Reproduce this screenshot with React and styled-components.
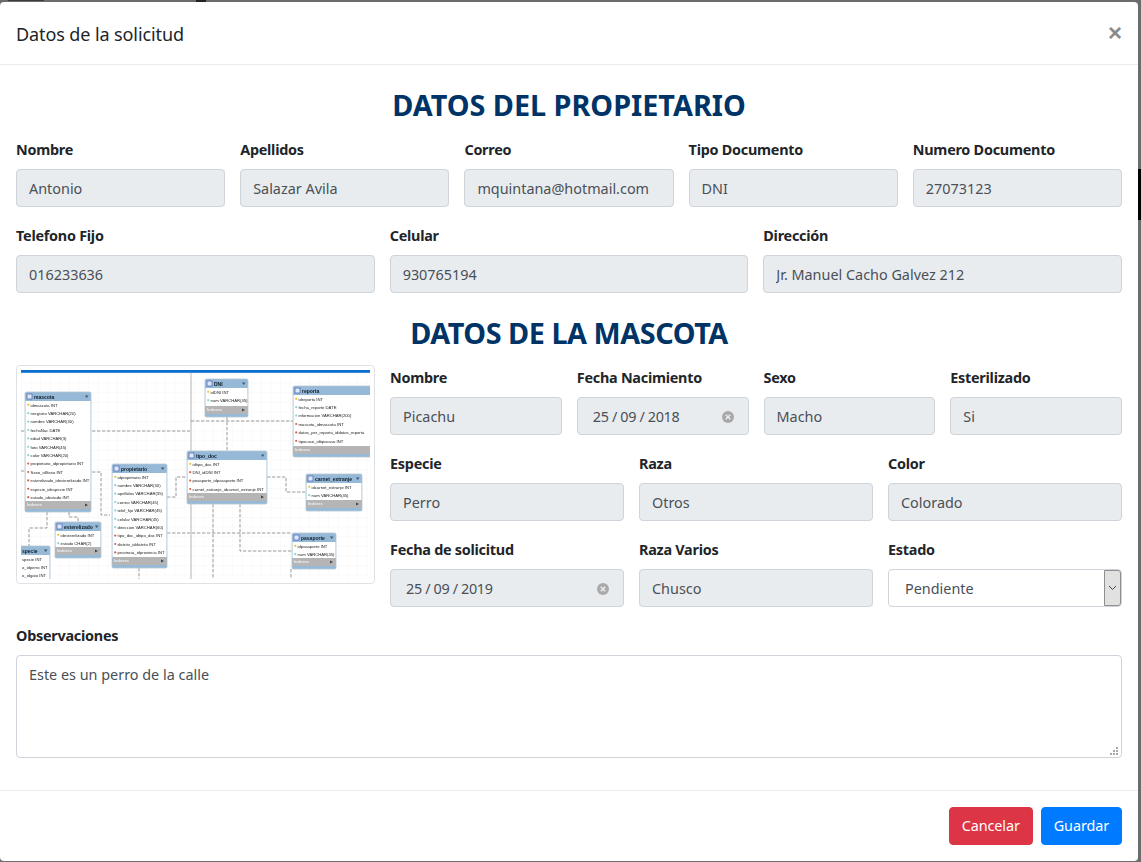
import React from "react";
import styled, { createGlobalStyle } from "styled-components";

const GlobalStyle = createGlobalStyle`
  html, body {
    margin: 0;
    padding: 0;
    height: 862px;
    overflow: hidden;
    font-family: "Noto Sans", "Liberation Sans", sans-serif;
  }
  * {
    box-sizing: border-box;
  }
`;

const Backdrop = styled.div`
  height: 862px;
  padding-top: 2px;
  background:
    linear-gradient(#000, #000) right 169px / 3px 51px no-repeat,
    linear-gradient(#222, #222) 196px 0 / 10px 2px no-repeat,
    linear-gradient(#3c3c3c, #3c3c3c) 8px 0 / 36px 1px no-repeat,
    #6c6c6c;
`;

const Modal = styled.div`
  width: 1138px;
  height: 859px;
  background: #fff;
  border-radius: 4px;
  color: #212529;
`;

const Header = styled.header`
  display: flex;
  align-items: flex-start;
  justify-content: space-between;
  height: 63px;
  padding: 16px;
  border-bottom: 1px solid #e9ecef;
`;

const ModalTitle = styled.h5`
  margin: 0;
  padding-top: 1px;
  font-size: 18px;
  font-weight: 400;
  line-height: 30px;
  letter-spacing: -0.1px;
`;

const Close = styled.button`
  border: 0;
  padding: 0;
  background: none;
  color: #8a8a8a;
  font: 700 24px/30px "Liberation Sans", sans-serif;
  cursor: pointer;
`;

const Body = styled.div`
  padding: 16px;
`;

const SectionTitle = styled.h2`
  margin: 5px 0 13px;
  color: #003366;
  font-size: 28.8px;
  font-weight: 700;
  line-height: 38px;
  letter-spacing: ${(p) => p.$spacing || "0"};
  text-align: center;
`;

const Row = styled.div`
  display: grid;
  grid-template-columns: repeat(${(p) => p.$cols}, minmax(0, 1fr));
  column-gap: 15px;
`;

const PetGrid = styled.div`
  display: grid;
  grid-template-columns: 359px minmax(0, 1fr);
  column-gap: 15px;
`;

const Thumbnail = styled.div`
  height: 219px;
  padding: 4px;
  background: #fff;
  border: 1px solid #dee2e6;
  border-radius: 4px;

  & > svg {
    display: block;
    width: 349px;
    height: 209px;
  }
`;

const Group = styled.div`
  margin-bottom: 16px;
`;

const Label = styled.label`
  display: block;
  margin-bottom: 7px;
  padding-top: 1px;
  font-size: 14.4px;
  font-weight: 700;
  line-height: 24px;
  letter-spacing: -0.25px;
`;

const fieldBase = `
  display: block;
  width: 100%;
  height: 38px;
  padding: 6px 12px;
  border: 1px solid #ced4da;
  border-radius: 4px;
  color: #495057;
  font-family: inherit;
  font-size: 14.4px;
  line-height: 24px;
`;

const Input = styled.input`
  ${fieldBase}
  background: #e9ecef;
  outline: none;
`;

const DateBox = styled.div`
  ${fieldBase}
  display: flex;
  align-items: center;
  justify-content: space-between;
  padding: 7px 14px 5px 15px;
  background: #e9ecef;
  letter-spacing: -0.35px;
`;

const SelectBox = styled.div`
  ${fieldBase}
  display: flex;
  align-items: center;
  justify-content: space-between;
  padding: 0 0 0 16px;
  background: #fff;

  & > span:first-child {
    padding-top: 1px;
  }
`;

const SelectArrow = styled.span`
  display: flex;
  align-items: center;
  justify-content: center;
  width: 17px;
  height: 36px;
  background: #e1e1e1;
  border: 1px solid #8f8f8f;
  border-radius: 0 3px 3px 0;
`;

const NotesWrap = styled.div`
  position: relative;
  height: 103px;
`;

const Notes = styled.textarea`
  ${fieldBase}
  height: 103px;
  padding-top: 7px;
  background: #fff;
  resize: none;
  outline: none;
`;

const Grip = styled.svg`
  position: absolute;
  right: 4px;
  bottom: 3px;
  width: 8px;
  height: 8px;
`;

const Footer = styled.footer`
  display: flex;
  justify-content: flex-end;
  gap: 8px;
  padding: 16px;
  border-top: 1px solid #e9ecef;
`;

const Button = styled.button`
  height: 38px;
  padding: 6px 12px;
  border: 1px solid ${(p) => p.$bg};
  border-radius: 4px;
  background: ${(p) => p.$bg};
  color: #fff;
  font-family: inherit;
  font-size: 14.4px;
  line-height: 24px;
  letter-spacing: -0.1px;
  cursor: pointer;
`;

const ClearIcon = () => (
  <svg width="12" height="12" viewBox="0 0 12 12">
    <circle cx="6" cy="6" r="6" fill="#a9a9a9" />
    <path d="M3.8 3.8l4.4 4.4M8.2 3.8l-4.4 4.4" stroke="#e9ecef" strokeWidth="1.6" />
  </svg>
);

const ChevronDown = () => (
  <svg width="9" height="6" viewBox="0 0 9 6">
    <path d="M1 1l3.5 3.5L8 1" fill="none" stroke="#444" strokeWidth="1" />
  </svg>
);

const erTables = [
  {
    name: "mascota", x: 25, y: 392, w: 66, h: 120,
    rows: [
      ["idmascota INT", "k"], ["nregistro VARCHAR(20)", "c"], ["nombre VARCHAR(30)", "c"],
      ["fechaNac DATE", "c"], ["edad VARCHAR(3)", "c"], ["foto VARCHAR(45)", "c"],
      ["color VARCHAR(20)", "c"], ["propietario_idpropietario INT", "f"], ["Sexo_idSexo INT", "f"],
      ["esterelizado_idesterelizado INT", "f"], ["especie_idespecie INT", "f"], ["estado_idestado INT", "f"],
    ],
  },
  {
    name: "esterelizado", x: 55, y: 522, w: 46, h: 36,
    rows: [["idesterelizado INT", "k"], ["estado CHAR(2)", "c"]],
  },
  {
    name: "propietario", x: 112, y: 464, w: 55, h: 104,
    rows: [
      ["idpropietario INT", "k"], ["nombre VARCHAR(30)", "c"], ["apellidos VARCHAR(35)", "c"],
      ["correo VARCHAR(45)", "c"], ["telef_fijo VARCHAR(45)", "c"], ["celular VARCHAR(45)", "c"],
      ["direccion VARCHAR(60)", "c"], ["tipo_doc_idtipo_doc INT", "f"], ["distrito_iddistrito INT", "f"],
      ["provincia_idprovincia INT", "f"],
    ],
  },
  {
    name: "specie", x: 2, y: 546, w: 48, h: 44, nameX: 22, textX: 22, cut: true,
    rows: [["specie INT", "n"], ["o_idperro INT", "n"], ["o_idgato INT", "n"]],
  },
  {
    name: "tipo_doc", x: 187, y: 451, w: 80, h: 53,
    rows: [
      ["idtipo_doc INT", "k"], ["DNI_idDNI INT", "f"], ["pasaporte_idpasaporte INT", "f"],
      ["carnet_extranje_idcarnet_extranje INT", "f"],
    ],
  },
  {
    name: "DNI", x: 205, y: 379, w: 43, h: 38,
    rows: [["idDNI INT", "k"], ["num VARCHAR(45)", "c"]],
  },
  {
    name: "reporta", x: 293, y: 386, w: 90, h: 71,
    rows: [
      ["idreporta INT", "k"], ["fecha_reporte DATE", "c"], ["informacion VARCHAR(200)", "c"],
      ["mascota_idmascota INT", "f"], ["datos_per_reporta_iddatos_reporta", "f"], ["tipocaso_idtipocaso INT", "f"],
    ],
  },
  {
    name: "carnet_extranje", x: 306, y: 474, w: 56, h: 37,
    rows: [["idcarnet_extranje INT", "k"], ["num VARCHAR(45)", "c"]],
  },
  {
    name: "pasaporte", x: 292, y: 533, w: 44, h: 36,
    rows: [["idpasaporte INT", "k"], ["num VARCHAR(45)", "c"]],
  },
];

const erLines = [
  "M92 431H190", "M21 431H25", "M21 471H25", "M92 472H101V515H110", "M47 512V528H29V546",
  "M69 512V517H78V522", "M167 497H176V477H187", "M167 533H292", "M139 568V579", "M227 417V451",
  "M191 421H293", "M267 477H286V492H306", "M240 504V551H292", "M213 504V579", "M291 569V579",
];

const markColor = { k: "#f2c230", c: "#8fd0d6", f: "#d9604c" };

const ErTable = ({ t }) => {
  const bottom = t.y + t.h;
  const tx = t.textX ?? t.x + 4;
  return (
    <g>
      <rect x={t.x} y={t.y} width={t.w} height={t.h} rx="1.5" fill="#95b9d6" stroke="#b4c6d4" strokeWidth="0.8" />
      <rect x={t.x + 0.5} y={t.y + 9} width={t.w - 1} height={t.h - 20} fill="#fff" />
      {!t.cut && <rect x={t.x + 0.5} y={bottom - 11} width={t.w - 1} height="8" fill="#b5b5b5" />}
      {!t.nameX && <rect x={t.x + 2} y={t.y + 2} width="5" height="5" fill="#dfe8f8" stroke="#4c60b8" strokeWidth="0.7" />}
      <text x={t.nameX ?? t.x + 9} y={t.y + 6.5} fontSize="5" fontWeight="700" fill="#101c2a">{t.name}</text>
      <path d={`M${t.x + t.w - 6} ${t.y + 3.5}h3.4l-1.7 2.6z`} fill="#44566a" />
      {t.rows.map(([label, kind], i) => {
        const cy = t.y + 13 + i * 8.4;
        return (
          <g key={label}>
            {kind !== "n" && <circle cx={tx - 0.8} cy={cy - 0.2} r="1.1" fill={markColor[kind]} />}
            <text x={kind === "n" ? tx : tx + 1.6} y={cy + 1.5} fontSize="4.2" fill="#222">{label}</text>
          </g>
        );
      })}
      {!t.cut && <text x={t.x + 2} y={bottom - 5.6} fontSize="4" fontWeight="700" fill="#eee">Indexes</text>}
      {!t.cut && <path d={`M${t.x + t.w - 6} ${bottom - 8.6}l3 1.6-3 1.6z`} fill="#444" />}
    </g>
  );
};

const ErDiagram = () => (
  <svg viewBox="21 370 349 209" role="img" aria-label="Diagrama">
    <defs>
      <pattern id="er-grid" x="21" y="373" width="9.6" height="9.6" patternUnits="userSpaceOnUse">
        <path d="M9.6 0H0V9.6" fill="none" stroke="#ececf0" strokeWidth="0.5" />
      </pattern>
      <filter id="er-soft" x="0" y="0" width="100%" height="100%">
        <feGaussianBlur stdDeviation="0.3" />
      </filter>
    </defs>
    <rect x="21" y="370" width="349" height="209" fill="#fff" />
    <rect x="21" y="373" width="349" height="206" fill="url(#er-grid)" />
    <g filter="url(#er-soft)" fontFamily="'Liberation Sans', sans-serif">
      <path d="M191 373V579" stroke="#b5b5b5" strokeWidth="1" fill="none" />
      {erLines.map((d) => (
        <path key={d} d={d} fill="none" stroke="#808080" strokeWidth="0.8" strokeDasharray="3.4 1.6" />
      ))}
      {erTables.map((t) => (
        <ErTable key={t.name} t={t} />
      ))}
    </g>
    <rect x="21" y="370" width="349" height="2.8" fill="#0b6fcf" />
  </svg>
);

const Field = ({ label, value }) => (
  <Group>
    <Label>{label}</Label>
    <Input readOnly value={value} />
  </Group>
);

const DateField = ({ label, value }) => (
  <Group>
    <Label>{label}</Label>
    <DateBox>
      <span>{value}</span>
      <ClearIcon />
    </DateBox>
  </Group>
);

export default function App() {
  return (
    <Backdrop>
      <GlobalStyle />
      <Modal>
        <Header>
          <ModalTitle>Datos de la solicitud</ModalTitle>
          <Close aria-label="Cerrar">×</Close>
        </Header>
        <Body>
          <SectionTitle>DATOS DEL PROPIETARIO</SectionTitle>
          <Row $cols={5}>
            <Field label="Nombre" value="Antonio" />
            <Field label="Apellidos" value="Salazar Avila" />
            <Field label="Correo" value="mquintana@hotmail.com" />
            <Field label="Tipo Documento" value="DNI" />
            <Field label="Numero Documento" value="27073123" />
          </Row>
          <Row $cols={3}>
            <Field label="Telefono Fijo" value="016233636" />
            <Field label="Celular" value="930765194" />
            <Field label="Dirección" value="Jr. Manuel Cacho Galvez 212" />
          </Row>
          <SectionTitle $spacing="-0.45px">DATOS DE LA MASCOTA</SectionTitle>
          <PetGrid>
            <Thumbnail>
              <ErDiagram />
            </Thumbnail>
            <div>
              <Row $cols={4}>
                <Field label="Nombre" value="Picachu" />
                <DateField label="Fecha Nacimiento" value="25 / 09 / 2018" />
                <Field label="Sexo" value="Macho" />
                <Field label="Esterilizado" value="Si" />
              </Row>
              <Row $cols={3}>
                <Field label="Especie" value="Perro" />
                <Field label="Raza" value="Otros" />
                <Field label="Color" value="Colorado" />
              </Row>
              <Row $cols={3}>
                <DateField label="Fecha de solicitud" value="25 / 09 / 2019" />
                <Field label="Raza Varios" value="Chusco" />
                <Group>
                  <Label>Estado</Label>
                  <SelectBox>
                    <span>Pendiente</span>
                    <SelectArrow>
                      <ChevronDown />
                    </SelectArrow>
                  </SelectBox>
                </Group>
              </Row>
            </div>
          </PetGrid>
          <Group>
            <Label>Observaciones</Label>
            <NotesWrap>
              <Notes readOnly value="Este es un perro de la calle" />
              <Grip viewBox="0 0 8 8" fill="#aaa">
                <rect x="6" y="0" width="2" height="2" />
                <rect x="3" y="3" width="2" height="2" />
                <rect x="6" y="3" width="2" height="2" />
                <rect x="0" y="6" width="2" height="2" />
                <rect x="3" y="6" width="2" height="2" />
                <rect x="6" y="6" width="2" height="2" />
              </Grip>
            </NotesWrap>
          </Group>
        </Body>
        <Footer>
          <Button $bg="#dc3545">Cancelar</Button>
          <Button $bg="#007bff">Guardar</Button>
        </Footer>
      </Modal>
    </Backdrop>
  );
}
